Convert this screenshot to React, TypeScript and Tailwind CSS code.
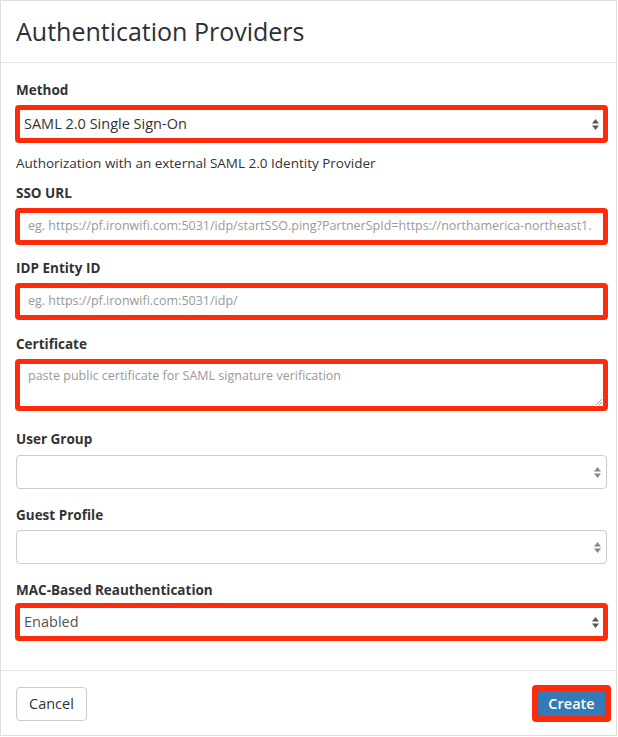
export default function App() {
  const font = { fontFamily: '"Open Sans", "Liberation Sans", sans-serif' };

  const Arrows = ({ color = "#555" }: { color?: string }) => (
    <svg width="7" height="11" viewBox="0 0 7 11" className="shrink-0">
      <polygon points="0,4.5 3.5,0 7,4.5" fill={color} />
      <polygon points="0,6.5 7,6.5 3.5,11" fill={color} />
    </svg>
  );

  return (
    <div className="w-[618px] h-[737px] bg-white text-[#333]" style={font}>
      <div className="w-[617px] h-[736px] border border-[#ddd] flex flex-col">
        {/* header */}
        <div className="h-[62px] border-b border-[#e5e5e5] flex items-center pl-[15px]">
          <h1 className="text-[25px] leading-none text-[#2b3038]">Authentication Providers</h1>
        </div>

        {/* body */}
        <div className="flex flex-col pl-[15px] pr-[9px] pt-[18px] pb-[29px]">
          <label className="text-[13.5px] leading-[18px] font-bold">Method</label>
          <div className="mt-[6px] -mx-[1px] h-[38px] border-[5px] border-[#ff2a0a] rounded-[4px] flex items-center justify-between pl-[4px] pr-[4px] text-[14.5px]">
            <span>SAML 2.0 Single Sign-On</span>
            <Arrows />
          </div>

          <p className="mt-[11px] text-[13.5px] leading-[18px]">
            Authorization with an external SAML 2.0 Identity Provider
          </p>

          <label className="mt-[12px] text-[13.5px] leading-[18px] font-bold">SSO URL</label>
          <div className="mt-[6px] -mx-[1px] h-[37px] border-[5px] border-[#ff2a0a] rounded-[4px] flex items-center pl-[8px] text-[12.5px] text-[#999] overflow-hidden whitespace-nowrap">
            eg. https://pf.ironwifi.com:5031/idp/startSSO.ping?PartnerSpId=https://northamerica-northeast1.
          </div>

          <label className="mt-[14px] text-[13.5px] leading-[18px] font-bold">IDP Entity ID</label>
          <div className="mt-[6px] -mx-[1px] h-[37px] border-[5px] border-[#ff2a0a] rounded-[4px] flex items-center pl-[8px] text-[12.5px] text-[#999]">
            eg. https://pf.ironwifi.com:5031/idp/
          </div>

          <label className="mt-[15px] text-[13.5px] leading-[18px] font-bold">Certificate</label>
          <div className="relative mt-[6px] -mx-[1px] h-[52px] border-[5px] border-[#ff2a0a] rounded-[4px] pl-[8px] pt-[3px] text-[12.5px] leading-[18px] text-[#999]">
            paste public certificate for SAML signature verification
            <svg width="7" height="7" viewBox="0 0 7 7" className="absolute right-[1px] bottom-[1px]">
              <line x1="1" y1="7" x2="7" y2="1" stroke="#888" strokeWidth="0.8" />
              <line x1="4" y1="7" x2="7" y2="4" stroke="#888" strokeWidth="0.8" />
            </svg>
          </div>

          <label className="mt-[19px] text-[13.5px] leading-[18px] font-bold">User Group</label>
          <div className="mt-[7px] h-[34px] border border-[#ccc] rounded-[4px] flex items-center justify-end pr-[5px]">
            <Arrows color="#888" />
          </div>

          <label className="mt-[17px] text-[13.5px] leading-[18px] font-bold">Guest Profile</label>
          <div className="mt-[6px] h-[34px] border border-[#ccc] rounded-[4px] flex items-center justify-end pr-[5px]">
            <Arrows color="#888" />
          </div>

          <label className="mt-[17px] text-[13.5px] leading-[18px] font-bold">MAC-Based Reauthentication</label>
          <div className="mt-[4px] -mx-[1px] h-[38px] border-[5px] border-[#ff2a0a] rounded-[4px] flex items-center justify-between pl-[4px] pr-[4px] text-[14.5px] text-[#555]">
            <span>Enabled</span>
            <Arrows />
          </div>
        </div>

        {/* footer */}
        <div className="flex-1 border-t border-[#e5e5e5] flex items-start justify-between pl-[15px] pr-[5px] pt-[16px]">
          <button className="h-[34px] px-[12px] border border-[#ccc] rounded-[4px] text-[14.5px] text-[#333] bg-white">
            Cancel
          </button>
          <div className="-mt-[2px] border-[6px] border-[#ff2a0a] rounded-[4px]">
            <button className="h-[25px] w-[67px] bg-[#337ab7] text-white text-[14.5px] font-semibold flex items-center justify-center">
              Create
            </button>
          </div>
        </div>
      </div>
    </div>
  );
}
